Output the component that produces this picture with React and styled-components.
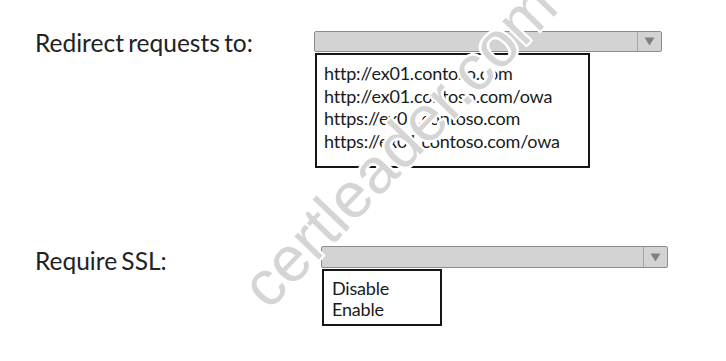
import React from "react";
import styled, { createGlobalStyle } from "styled-components";

const Global = createGlobalStyle`
  html, body { margin: 0; padding: 0; background: #fff; }
  body { font-family: Lato, "Open Sans", sans-serif; color: #1c1c1c; }
`;

const Page = styled.div`
  position: relative;
  width: 726px;
  height: 361px;
  overflow: hidden;
  box-sizing: border-box;
  padding: 31px 0 0 35px;
  display: flex;
  flex-direction: column;
  gap: ${p => p.$gap}px;
`;

const Row = styled.div`
  display: grid;
  grid-template-columns: ${p => p.$labelWidth}px ${p => p.$controlWidth}px;
  align-items: start;
`;

const Label = styled.div`
  font-size: 24.5px;
  line-height: 22px;
  color: #222;
  word-spacing: -2px;
  padding-top: ${p => p.$shift}px;
  white-space: nowrap;
`;

const Control = styled.div`
  display: flex;
  flex-direction: column;
  align-items: flex-start;
`;

const Bar = styled.div`
  box-sizing: border-box;
  width: 100%;
  height: ${p => p.$h}px;
  background: #d3d3d3;
  border: 1px solid #8c8c8c;
  border-radius: 2px;
  display: flex;
  justify-content: flex-end;
`;

const ArrowBox = styled.div`
  width: 23px;
  border-left: 1px solid #a5a5a5;
  display: flex;
  align-items: center;
  justify-content: center;
`;

const List = styled.ul`
  box-sizing: border-box;
  list-style: none;
  margin: 1px 0 0 1px;
  width: ${p => p.$w}px;
  height: ${p => p.$h}px;
  padding: ${p => p.$pad};
  border: 2px solid #161616;
  background: #fff;
  font-size: 18px;
  letter-spacing: -0.2px;
  line-height: ${p => p.$lh}px;
  color: #1a1a1a;
`;

const Item = styled.li`
  white-space: nowrap;
`;

const Watermark = styled.div`
  position: absolute;
  left: 230px;
  top: 274px;
  transform-origin: 0 0;
  transform: rotate(-46deg);
  font-family: "Liberation Sans", Arial, sans-serif;
  font-size: 64px;
  line-height: 1;
  color: #d5d5d5;
  white-space: nowrap;
  pointer-events: none;
  text-shadow:
    2px 0 0 #fff, -2px 0 0 #fff, 0 2px 0 #fff, 0 -2px 0 #fff,
    2px 2px 0 #fff, -2px -2px 0 #fff, 2px -2px 0 #fff, -2px 2px 0 #fff;
`;

const Arrow = () => (
  <svg width="11" height="9" viewBox="0 0 11 9">
    <path d="M0.5 0.5 H10.5 L5.5 8.5 Z" fill="#808080" />
  </svg>
);

function Dropdown({ barHeight, listW, listH, pad, lh, items }) {
  return (
    <Control>
      <Bar $h={barHeight}>
        <ArrowBox>
          <Arrow />
        </ArrowBox>
      </Bar>
      <List $w={listW} $h={listH} $pad={pad} $lh={lh}>
        {items.map(t => (
          <Item key={t}>{t}</Item>
        ))}
      </List>
    </Control>
  );
}

export default function App() {
  return (
    <>
      <Global />
      <Page $gap={78}>
        <Row $labelWidth={279} $controlWidth={348}>
          <Label $shift={1}>Redirect requests to:</Label>
          <Dropdown
            barHeight={21}
            listW={275}
            listH={115}
            pad="7px 7px 0"
            lh={22.5}
            items={[
              "http://ex01.contoso.com",
              "http://ex01.contoso.com/owa",
              "https://ex01.contoso.com",
              "https://ex01.contoso.com/owa",
            ]}
          />
        </Row>
        <Row $labelWidth={286} $controlWidth={347}>
          <Label $shift={4}>Require SSL:</Label>
          <Dropdown
            barHeight={22}
            listW={120}
            listH={57}
            pad="7px 8px 0"
            lh={21}
            items={["Disable", "Enable"]}
          />
        </Row>
        <Watermark>certleader.com</Watermark>
      </Page>
    </>
  );
}
